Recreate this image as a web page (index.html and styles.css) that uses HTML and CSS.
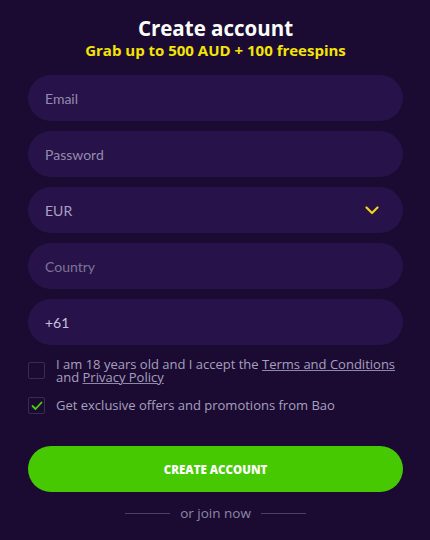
FILE: index.html
```html
<!DOCTYPE html>
<html>
<head>
<meta charset="utf-8">
<link rel="stylesheet" href="styles.css">
</head>
<body>
<div class="page">
  <div class="header">
    <div class="title">Create account</div>
    <div class="subtitle">Grab up to 500 AUD + 100 freespins</div>
  </div>
  <div class="fields">
    <div class="field"><span class="ph">Email</span></div>
    <div class="field"><span class="ph">Password</span></div>
    <div class="field select"><span class="val">EUR</span>
      <svg class="chev" width="14" height="9" viewBox="0 0 14 9"><path d="M1.5 1.5 L7 7 L12.5 1.5" fill="none" stroke="#f2d21a" stroke-width="2.2" stroke-linecap="round" stroke-linejoin="round"/></svg>
    </div>
    <div class="field"><span class="ph dim">Country</span></div>
    <div class="field"><span class="val light">+61</span></div>
  </div>
  <div class="checks">
    <div class="check">
      <div class="box"></div>
      <div class="ctext">I am 18 years old and I accept the <u>Terms and Conditions</u><br>and <u>Privacy Policy</u></div>
    </div>
    <div class="check mid">
      <div class="box"><svg width="12" height="10" viewBox="0 0 12 10"><path d="M1.5 5 L4.5 8 L10.5 1.5" fill="none" stroke="#49d10a" stroke-width="1.8" stroke-linecap="round" stroke-linejoin="round"/></svg></div>
      <div class="ctext">Get exclusive offers and promotions from Bao</div>
    </div>
  </div>
  <div class="btn">CREATE ACCOUNT</div>
  <div class="join"><span class="line"></span><span>or join now</span><span class="line"></span></div>
</div>
</body>
</html>
```
FILE: styles.css
```css
html, body {
  margin: 0;
  padding: 0;
  background: #1b0b33;
}
body {
  font-family: "Open Sans", Lato, sans-serif;
}
.page {
  width: 430px;
  height: 540px;
  box-sizing: border-box;
  padding: 16px 27px 0 28px;
  overflow: hidden;
}
.header {
  text-align: center;
}
.title {
  color: #ffffff;
  font-size: 20.5px;
  font-weight: 700;
  line-height: 25px;
}
.subtitle {
  color: #f5e500;
  font-size: 15px;
  font-weight: 700;
  line-height: 19px;
}
.fields {
  margin-top: 15px;
  display: flex;
  flex-direction: column;
  gap: 10px;
}
.field {
  height: 46px;
  border-radius: 23px;
  background: #27124a;
  display: flex;
  align-items: center;
  padding: 0 24px 0 17px;
  font-family: Lato, sans-serif;
  font-size: 14px;
}
.ph { color: #938cad; }
.ph.dim { color: #7d7596; }
.val { color: #a9a3c2; }
.val.light { color: #c6c1da; }
.select { justify-content: space-between; }
.chev { margin-top: 1px; }
.checks {
  margin-top: 12px;
  display: flex;
  flex-direction: column;
  gap: 13px;
}
.check {
  display: flex;
  align-items: flex-start;
  gap: 11px;
}
.check.mid { align-items: center; }
.box {
  flex: none;
  width: 15px;
  height: 15px;
  border: 1px solid #3a2a56;
  border-radius: 2px;
  margin-top: 5px;
  display: flex;
  align-items: center;
  justify-content: center;
}
.check.mid .box { margin-top: 0; }
.ctext {
  color: #a6a0bd;
  font-size: 13px;
  line-height: 13px;
  white-space: nowrap;
  padding-top: 1px;
}
.check.mid .ctext { padding-top: 0; }
.ctext u {
  text-decoration-color: #8f88aa;
}
.btn {
  margin-top: 32px;
  height: 46px;
  border-radius: 23px;
  background: #46c900;
  color: #ffffff;
  font-size: 11.5px;
  font-weight: 800;
  display: flex;
  align-items: center;
  justify-content: center;
}
.join {
  margin-top: 12px;
  display: flex;
  align-items: center;
  justify-content: center;
  gap: 10px;
  color: #8e87a6;
  font-size: 13.5px;
}
.line {
  width: 45px;
  height: 1px;
  background: #4b3f63;
}
```
